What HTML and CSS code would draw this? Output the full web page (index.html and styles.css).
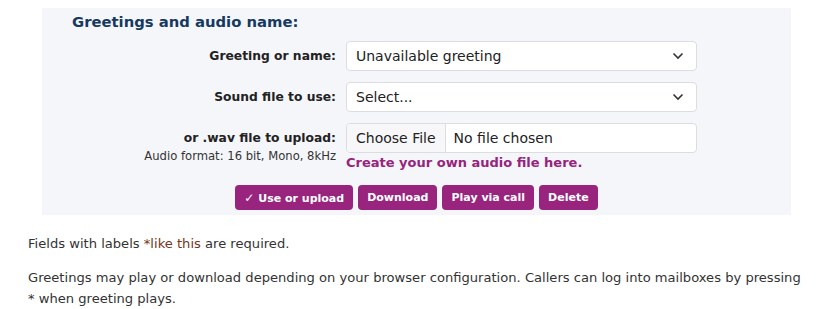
FILE: index.html
```
<!DOCTYPE html>
<html>

<head>
  <title>Greetings</title>
  <link rel="stylesheet" href="styles.css">
</head>

<body>
  <main class="page">
    <section class="greetings-panel">
      <h2>Greetings and audio name:</h2>

      <form class="greeting-form">
        <label class="field-label" for="greeting">Greeting or name:</label>
        <div class="select-wrap">
          <select id="greeting">
            <option>Unavailable greeting</option>
          </select>
          <svg class="chevron" width="12" height="8" viewBox="0 0 12 8">
            <path d="M1.5 1.5 L6 6 L10.5 1.5" fill="none" stroke="#333" stroke-width="1.6" />
          </svg>
        </div>

        <label class="field-label" for="sound">Sound file to use:</label>
        <div class="select-wrap">
          <select id="sound">
            <option>Select...</option>
          </select>
          <svg class="chevron" width="12" height="8" viewBox="0 0 12 8">
            <path d="M1.5 1.5 L6 6 L10.5 1.5" fill="none" stroke="#333" stroke-width="1.6" />
          </svg>
        </div>

        <div class="field-label upload-label">
          <label for="wav">or .wav file to upload:</label>
          <span class="note">Audio format: 16 bit, Mono, 8kHz</span>
        </div>
        <div class="upload-cell">
          <input type="file" id="wav">
          <a href="#" class="create-link">Create your own audio file here.</a>
        </div>
      </form>

      <div class="actions">
        <button type="button"><span class="tick">&#10003;</span> Use or upload</button>
        <button type="button">Download</button>
        <button type="button">Play via call</button>
        <button type="button">Delete</button>
      </div>
    </section>

    <p class="first">Fields with labels <span class="required">*like this</span> are required.</p>
    <p>Greetings may play or download depending on your browser configuration. Callers can log into mailboxes by pressing * when greeting plays.</p>
  </main>
</body>

</html>
```

FILE: styles.css
```
body {
  margin: 0;
  font-family: "DejaVu Sans", Verdana, sans-serif;
  color: #333;
  background: #fff;
}

.page {
  padding: 8px 10px 0 28px;
}

.greetings-panel {
  margin: 0 15px 0 14px;
  padding: 4px 30px 5px;
  background-color: #f5f6fa;
}

.greetings-panel h2 {
  margin: 0 0 9px 0;
  font-size: 14.8px;
  line-height: 20px;
  color: #163a5f;
}

.greeting-form {
  display: grid;
  grid-template-columns: 264px 351px;
  column-gap: 10px;
  row-gap: 11px;
}

.field-label {
  text-align: right;
  font-size: 12.3px;
  font-weight: bold;
  line-height: 30px;
  color: #222;
}

.upload-label label {
  display: block;
}

.note {
  display: block;
  margin-top: -4px;
  font-size: 11.6px;
  font-weight: normal;
  line-height: 14px;
  color: #333;
}

.select-wrap {
  position: relative;
}

.select-wrap select {
  width: 100%;
  height: 30px;
  padding: 0 9px;
  box-sizing: border-box;
  border: 1px solid #dcdde3;
  border-radius: 4px;
  background: #fff;
  font-family: inherit;
  font-size: 14px;
  color: #222;
  appearance: none;
  -webkit-appearance: none;
}

/* chevron drawn over the select */
.chevron {
  position: absolute;
  right: 13px;
  top: 11px;
  pointer-events: none;
}

.upload-cell input {
  display: block;
  width: 100%;
  height: 30px;
  box-sizing: border-box;
  border: 1px solid #dcdde3;
  border-radius: 4px;
  background: #fff;
  font-family: inherit;
  font-size: 14px;
  color: #222;
}

.upload-cell input::file-selector-button {
  height: 100%;
  margin: 0 8px 0 0;
  padding: 0 9px;
  border: none;
  border-right: 1px solid #dcdde3;
  background: #f7f7f9;
  font-family: inherit;
  font-size: 14px;
  color: #222;
}

.create-link {
  display: block;
  margin-top: 2px;
  font-size: 13px;
  font-weight: bold;
  line-height: 16px;
  color: #97237d;
  text-decoration: none;
}

.actions {
  display: flex;
  justify-content: center;
  gap: 5px;
  margin-top: 14px;
}

.actions button {
  height: 25px;
  padding: 0 9px;
  border: none;
  border-radius: 4px;
  background-color: #98247e;
  font-family: inherit;
  font-size: 11px;
  font-weight: bold;
  color: #fff;
}

.tick {
  font-size: 12px;
}

.page p {
  margin: 13px 0 0 0;
  font-size: 13.1px;
  line-height: 21px;
}

.page p.first {
  margin-top: 18px;
}

.required {
  color: #7a3418;
}
```
